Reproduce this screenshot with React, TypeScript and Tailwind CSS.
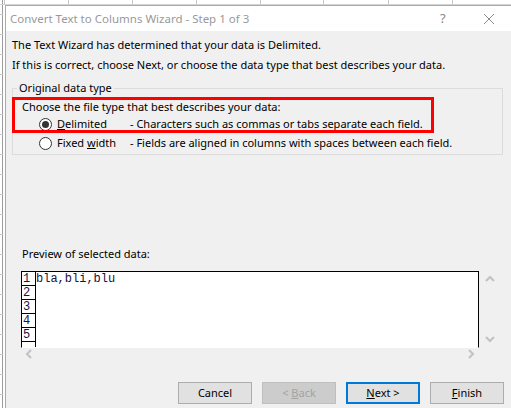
import { ReactNode } from "react";

const ui = "font-['Segoe_UI','Noto_Sans',sans-serif] text-[11px]";

const Radio = ({ checked }: { checked?: boolean }) => (
  <span className="w-[13px] h-[13px] rounded-full border border-[#333] bg-white flex items-center justify-center shrink-0">
    {checked && <span className="w-[7px] h-[7px] rounded-full bg-[#333]" />}
  </span>
);

const Btn = ({
  children,
  variant = "normal",
}: {
  children: ReactNode;
  variant?: "normal" | "disabled" | "default";
}) => (
  <div
    className={`w-[74px] h-[22px] flex items-center justify-center whitespace-pre ${
      variant === "disabled"
        ? "bg-[#cccccc] border border-[#bfbfbf] text-[#a3a3a3]"
        : variant === "default"
          ? "bg-[#e1e1e1] border-2 border-[#0078d7] text-black"
          : "bg-[#e1e1e1] border border-[#adadad] text-black"
    }`}
  >
    {children}
  </div>
);

const Chevron = ({ dir }: { dir: "up" | "down" | "left" | "right" }) => {
  const d = {
    up: "M1 6 L5 2 L9 6",
    down: "M1 2 L5 6 L9 2",
    left: "M6 1 L2 5 L6 9",
    right: "M2 1 L6 5 L2 9",
  }[dir];
  const horiz = dir === "left" || dir === "right";
  return (
    <svg width={horiz ? 8 : 10} height={horiz ? 10 : 8} viewBox={horiz ? "0 0 8 10" : "0 0 10 8"}>
      <path d={d} fill="none" stroke="#c2c2c2" strokeWidth="2" />
    </svg>
  );
};

export default function App() {
  const cols = [4, 68, 132, 196, 260, 323, 388, 452];
  const rows = [14, 34, 54, 74, 94, 114, 134, 154, 174, 194, 214, 234, 254, 274, 294, 314, 334, 354, 374, 394];

  return (
    <div className={`w-[511px] h-[408px] relative overflow-hidden bg-white ${ui}`}>
      {/* excel sheet behind the dialog */}
      <div className="absolute inset-0">
        {cols.map(x => (
          <div key={x} className="absolute top-0 h-[5px] w-px bg-[#c6c6c6]" style={{ left: x }} />
        ))}
        <div className="absolute left-[2px] top-0 bottom-0 w-px bg-[#9b9b9b]" />
        {rows.map(y => (
          <div key={y} className="absolute left-0 w-[3px] h-px bg-[#c6c6c6]" style={{ top: y }} />
        ))}
        <div className="absolute left-0 right-0 top-[4px] h-px bg-[#d4d4d4]" />
      </div>

      {/* dialog */}
      <div className="absolute left-[5px] top-[5px] right-[-20px] bottom-[-20px] border-l border-t border-[#aaaaaa] bg-[#f0f0f0] flex flex-col">
        <div className="h-[25px] bg-white flex items-center pl-[4px] text-[#999999] text-[12px]">
          <span className="flex-1 text-[11.5px]">Convert Text to Columns Wizard - Step 1 of 3</span>
          <span className="w-[10px] text-[#888] text-[13px] mr-[33px]">?</span>
          <svg width="12" height="12" viewBox="0 0 12 12" className="mr-[36px]">
            <path d="M1 1 L11 11 M11 1 L1 11" stroke="#8a8a8a" strokeWidth="1" />
          </svg>
        </div>

        <div className="pl-[6px] pr-[26px] text-black">
          <div className="mt-[4px] leading-[20px]">The Text Wizard has determined that your data is Delimited.</div>
          <div className="leading-[20px]">If this is correct, choose Next, or choose the data type that best describes your data.</div>

          <div className="relative mt-[13px] mr-[2px] h-[67px] border border-[#dcdcdc]">
            <span className="absolute left-[4px] top-[-9px] px-[2px] bg-[#f0f0f0] leading-[16px]">Original data type</span>
            <div className="absolute left-[-1px] top-[8px] w-[422px] h-[36px] border-[3px] border-[#ff0000]" />
            <div className="pt-[10px] pl-[9px]">
              <div className="leading-[16px]">Choose the file type that best describes your data:</div>
              <div className="flex items-center h-[18px] pl-[17px]">
                <Radio checked />
                <span className="ml-[5px] w-[73px]"><u>D</u>elimited</span>
                <span>- Characters such as commas or tabs separate each field.</span>
              </div>
              <div className="flex items-center h-[20px] pl-[17px]">
                <Radio />
                <span className="ml-[5px] w-[73px]">Fixed <u>w</u>idth</span>
                <span>- Fields are aligned in columns with spaces between each field.</span>
              </div>
            </div>
          </div>

          <div className="mt-[90px] ml-[10px] leading-[18px]">Preview of selected data:</div>

          <div className="mt-[8px] ml-[9px] flex">
            <div className="w-[458px] h-[77px] border border-black border-b-white bg-white overflow-hidden flex font-['Liberation_Mono','Courier_New',monospace] text-[12px] text-[#1b1040]">
              <div className="w-[14px] flex flex-col border-r border-black">
                {["1", "2", "3", "4", "5", ""].map((n, i) => (
                  <div key={i} className="h-[14px] shrink-0 border-b border-black leading-[14px] pl-[1px]">
                    {n}
                  </div>
                ))}
              </div>
              <div className="pt-[1px] leading-[13px]">bla,bli,blu</div>
            </div>
            <div className="ml-[4px] h-[77px] flex flex-col justify-between items-center w-[14px] pt-[4px] pb-[5px]">
              <Chevron dir="up" />
              <Chevron dir="down" />
            </div>
          </div>
          <div className="ml-[13px] w-[450px] h-[12px] flex items-center justify-between">
            <Chevron dir="left" />
            <Chevron dir="right" />
          </div>

          <div className="mt-[22px] ml-[166px] flex gap-[10px]">
            <Btn>Cancel</Btn>
            <Btn variant="disabled">{"< "}<u>B</u>ack</Btn>
            <Btn variant="default"><u>N</u>ext{" >"}</Btn>
            <Btn><u>F</u>inish</Btn>
          </div>
        </div>
      </div>
    </div>
  );
}
